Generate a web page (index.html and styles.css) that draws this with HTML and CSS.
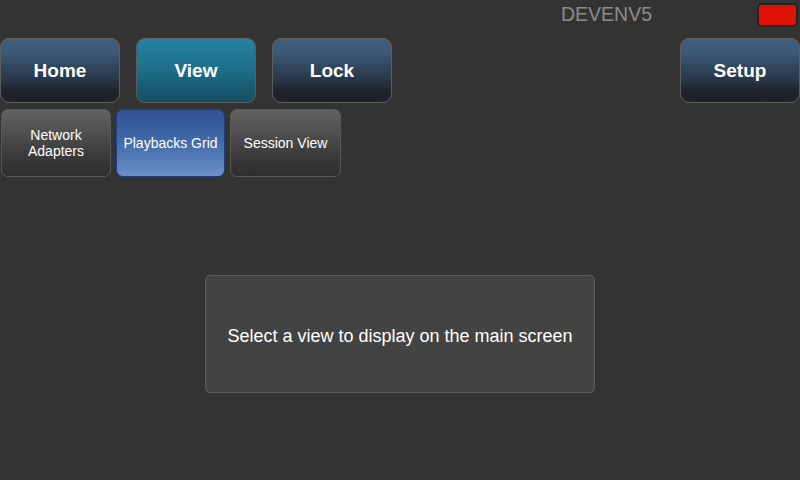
FILE: index.html
```html
<!DOCTYPE html>
<html>
<head>
<meta charset="utf-8">
<link rel="stylesheet" href="styles.css">
</head>
<body>
<div class="app">
  <header class="status">
    <span class="host">DEVENV5</span>
    <span class="indicator"></span>
  </header>
  <nav class="mainnav">
    <button class="navbtn">Home</button>
    <button class="navbtn active">View</button>
    <button class="navbtn">Lock</button>
    <span class="spacer"></span>
    <button class="navbtn">Setup</button>
  </nav>
  <nav class="subnav">
    <button class="subbtn network">Network<br>Adapters</button>
    <button class="subbtn selected">Playbacks Grid</button>
    <button class="subbtn session">Session View</button>
  </nav>
  <main class="content">
    <div class="panel">Select a view to display on the main screen</div>
  </main>
</div>
</body>
</html>
```
FILE: styles.css
```css
html, body {
  margin: 0;
  padding: 0;
  background: #333333;
  width: 800px;
  height: 480px;
  overflow: hidden;
  font-family: "Liberation Sans", Arial, sans-serif;
}
.app {
  display: flex;
  flex-direction: column;
  height: 480px;
}
.status {
  display: flex;
  align-items: flex-start;
  justify-content: flex-end;
  height: 38px;
  box-sizing: border-box;
  padding-top: 3px;
  padding-right: 2px;
}
.host {
  color: #8c8c8c;
  font-size: 19.5px;
  line-height: 22px;
  margin-right: 105px;
}
.indicator {
  width: 41px;
  height: 24px;
  box-sizing: border-box;
  background: #e01208;
  border: 2px solid #242424;
  border-radius: 5px;
}
.mainnav {
  display: flex;
  gap: 16px;
}
.spacer { flex: 1; }
.navbtn {
  width: 120px;
  height: 65px;
  box-sizing: border-box;
  border: 1px solid #5e5e5e;
  border-radius: 9px;
  background: linear-gradient(to bottom, #42617f 0%, #3a5672 25%, #2a3a4c 60%, #1f232b 85%, #1f2228 100%);
  color: #ffffff;
  font-family: "Liberation Sans", Arial, sans-serif;
  font-weight: bold;
  font-size: 19px;
  padding: 0;
  margin: 0;
}
.navbtn.active {
  background: linear-gradient(to bottom, #23819f 0%, #1f7390 40%, #185a70 80%, #154d60 100%);
}
.subnav {
  display: flex;
  gap: 5px;
  margin-top: 6px;
  padding-left: 1px;
}
.subbtn {
  width: 109px;
  height: 68px;
  box-sizing: border-box;
  border: 1px solid #5a5a5a;
  border-radius: 7px;
  background: linear-gradient(to bottom, #616161 0%, #4f4f4f 35%, #3a3a3a 70%, #2e2e2e 100%);
  color: #ffffff;
  font-family: "Liberation Sans", Arial, sans-serif;
  font-size: 14px;
  line-height: 16px;
  padding: 0;
  margin: 0;
}
.subbtn.network { width: 110px; }
.subbtn.session { width: 111px; }
.subbtn.selected {
  border-color: #1e3f7c;
  background: linear-gradient(to bottom, #2f5393 0%, #4168a8 45%, #6a90c8 100%);
}
.content {
  flex: 1;
  display: flex;
  justify-content: center;
  padding-top: 98px;
}
.panel {
  width: 390px;
  height: 118px;
  box-sizing: border-box;
  background: #434343;
  border: 1px solid #5e5e5e;
  border-radius: 5px;
  display: flex;
  align-items: center;
  justify-content: center;
  padding-top: 4px;
  color: #ffffff;
  font-size: 18px;
}
```
